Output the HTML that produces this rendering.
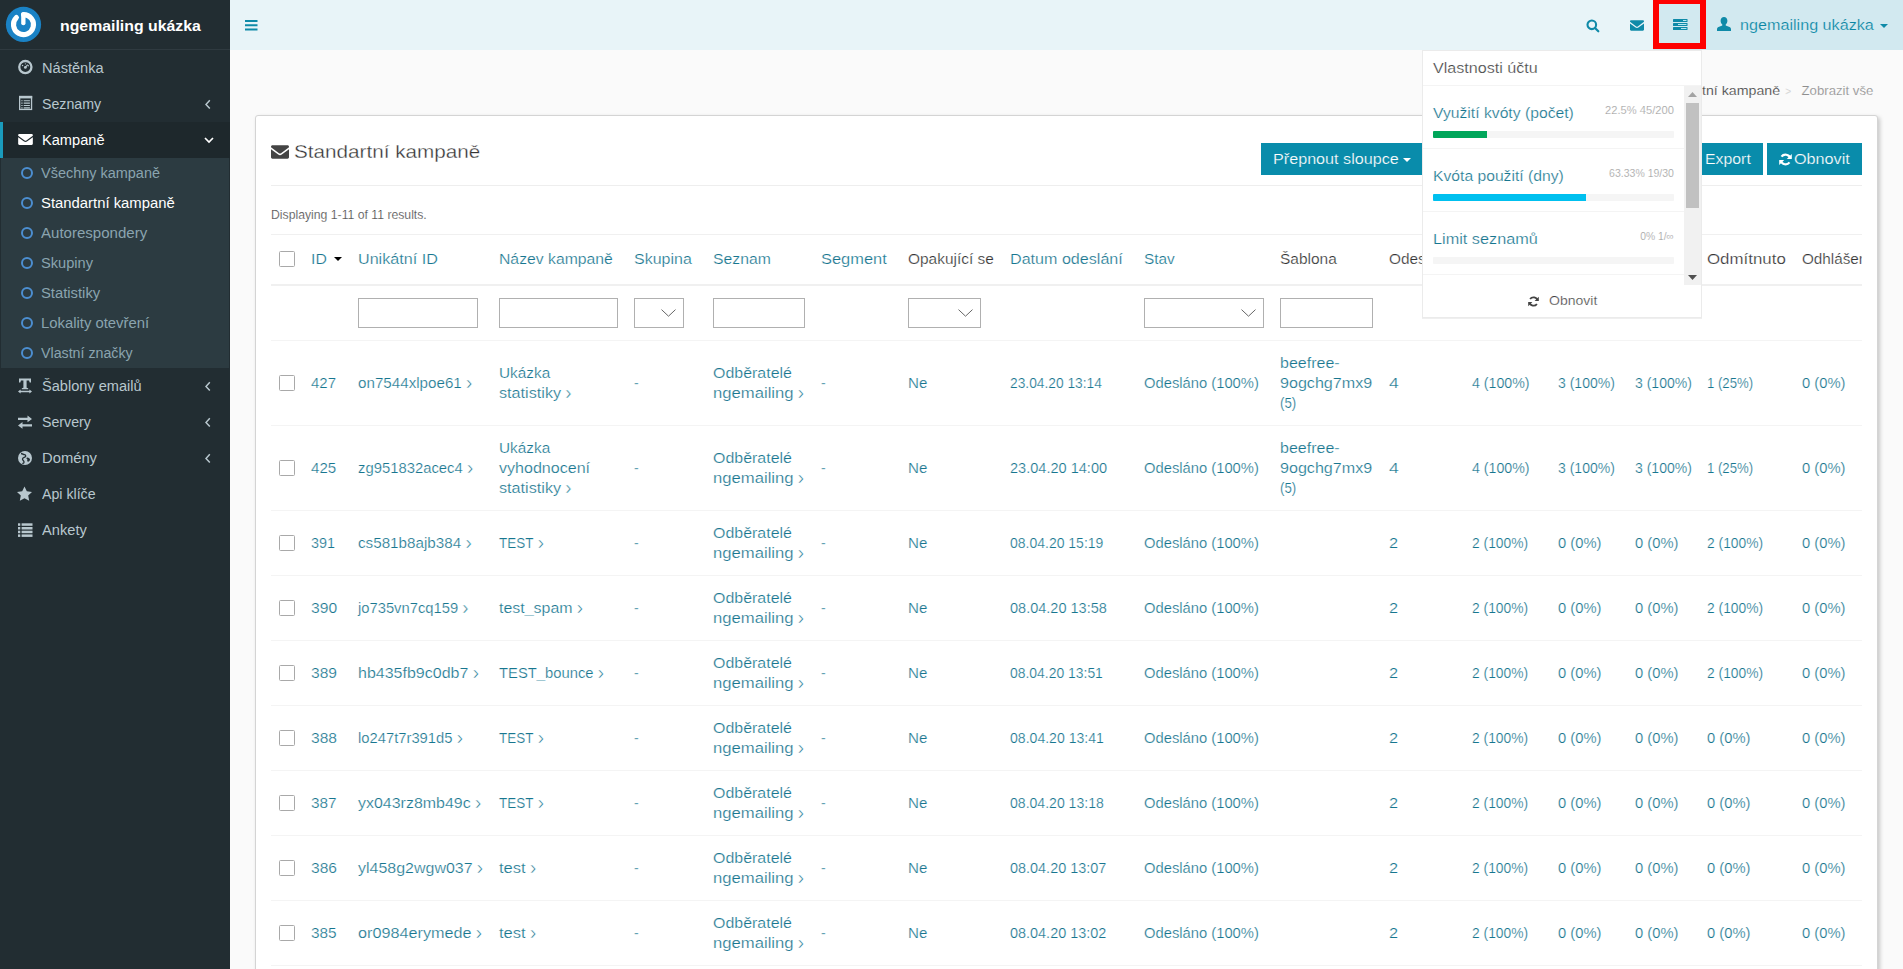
<!DOCTYPE html><html lang="cs"><head><meta charset="utf-8"><title>Standartní kampaně</title><style>
*{box-sizing:border-box}
html,body{margin:0;padding:0}
body{width:1903px;height:969px;overflow:hidden;background:#fafafa;font-family:"Liberation Sans",sans-serif;font-size:14px;line-height:20px;color:#333;position:relative}
a{color:#17768f;text-decoration:none}
svg{display:block}
.abs{position:absolute}
.sx{display:inline-block;transform-origin:0 50%;white-space:nowrap}
/* header */
.logo{position:absolute;left:0;top:0;width:230px;height:50px;background:#222d32;border-bottom:1px solid #2f3a40;color:#fff;font-weight:bold;font-size:15px;line-height:50px}
.logo .lt{position:absolute;left:60px;top:1px;white-space:nowrap}
.logo svg{position:absolute;left:5px;top:6px}
.navbar{position:absolute;left:230px;top:0;width:1673px;height:50px;background:#e8f4f8}
.navbar .user{position:absolute;left:1476px;top:0;width:197px;height:50px;background:#d2e9f0}
.navbar .open{position:absolute;left:1423px;top:0;width:53px;height:50px;background:#d2e9f0}
.nvt{position:absolute;white-space:nowrap;color:#0b85a3;font-size:14px;line-height:20px}
/* sidebar */
.sidebar{position:absolute;left:0;top:50px;width:230px;height:919px;background:#222d32}
.sidebar ul{list-style:none;margin:0;padding:0}
.sidebar>ul>li>a{display:block;height:36px;line-height:36px;padding-left:39px;color:#b8c7ce;border-left:3px solid transparent;position:relative;white-space:nowrap;font-size:14px}
.sidebar>ul>li.active>a{background:#1e282c;color:#fff;border-left-color:#1a9bbc}
.sidebar .ic{position:absolute;left:14px;top:0}
.sidebar .ar{position:absolute;right:19.5px;top:0}
.sidebar ul ul{background:#2c3b41;margin:0 1px}
.sidebar ul ul a{display:block;height:30px;line-height:30px;padding-left:40px;color:#8aa4af;position:relative;white-space:nowrap;font-size:14px}
.sidebar ul ul li.cur a{color:#fff}
.sidebar ul ul .ci{position:absolute;left:20px;top:9px;width:12px;height:12px;border:2px solid #4c8ed0;border-radius:50%}
/* content */
.bc{position:absolute;right:30px;top:80.5px;font-size:12px;line-height:20px;white-space:nowrap;color:#8e8e8e}
.bc b{font-weight:normal;color:#444}
.bc i{font-style:normal;color:#c4c4c4;font-size:10px}
.box{position:absolute;left:255px;top:115px;width:1623px;height:900px;background:#fff;border:1px solid #d4d4d4;border-radius:3px;box-shadow:2px 2px 4px rgba(0,0,0,.2)}
.title{position:absolute;left:38px;top:26px;font-size:17.5px;line-height:20px;color:#444;white-space:nowrap}
.box .tic{position:absolute;left:15px;top:29px}
.btn{position:absolute;top:27px;height:32px;background:#098cab;color:#fff;font-size:14px;line-height:20px;padding:6px 12px;white-space:nowrap}
.hr{position:absolute;left:15px;width:1591px;height:1px;background:#eee}
.sum{position:absolute;left:15px;top:89px;font-size:13px;line-height:20px;color:#444;white-space:nowrap}
.tw{position:absolute;left:15px;top:118px;width:1591px;height:760px;overflow:hidden}
table{border-collapse:collapse;table-layout:fixed;width:1649px;border-top:1px solid #f0f0f0}
th,td{padding:12px 8px;text-align:left;vertical-align:middle;font-weight:normal;line-height:20px;font-size:14px;overflow:hidden;white-space:nowrap}
td.wr{white-space:normal}
thead tr.h th{height:50px;padding-top:14px;padding-bottom:14px;border-bottom:2px solid #f0f0f0;color:#333}
thead tr.f td{height:55px;border-bottom:1px solid #f4f4f4}
tbody td{border-bottom:1px solid #f4f4f4;color:#17768f}
.cb{display:block;width:16px;height:16px;border:1px solid #a9a9a9;border-radius:1.5px;background:#fff}
.inp{display:block;height:30px;border:1px solid #b0b0b0;background:#fff;position:relative}
.inp svg{position:absolute;right:7.5px;top:10px}
.ra{font-size:20px;line-height:0;margin-left:4px;position:relative;top:1.5px;-webkit-text-stroke:.5px #fff}
.caret{display:inline-block;width:0;height:0;border-left:4px solid transparent;border-right:4px solid transparent;border-top:4px solid currentColor;vertical-align:middle}
/* dropdown */
.dd{position:absolute;left:1422px;top:50px;width:280px;height:268px;background:#fff;border:1px solid #ebebeb;box-shadow:0 1px 0 #efefef;font-size:14px}
.dd .hd{position:absolute;left:10px;top:7px;color:#444;white-space:nowrap}
.dd .ln{position:absolute;left:0;height:1px;background:#f4f4f4}
.dd .lb{position:absolute;left:10px;color:#17768f;white-space:nowrap}
.dd .sm{position:absolute;right:10px;font-size:11px;color:#999;white-space:nowrap;line-height:14px}
.dd .pg{position:absolute;left:10px;width:241px;height:7px;background:#f5f5f5;border-radius:1px;overflow:hidden}
.dd .pg div{height:7px}
.dd .sc{position:absolute;left:0;top:35px;width:261px;height:199px;overflow:hidden}
.dd .sb{position:absolute;left:261px;top:35px;width:17px;height:199px;background:#f1f1f1}
.dd .th{position:absolute;left:2px;top:17px;width:13px;height:105px;background:#c1c1c1}
.dd .ft{position:absolute;left:0;top:240px;width:278px;color:#444;font-size:12px;white-space:nowrap}
.box,.dd{-webkit-text-stroke:.22px #fff}
.btn{-webkit-text-stroke:.2px #098cab}
.bc{-webkit-text-stroke:.15px #fafafa}
.nvt{-webkit-text-stroke:.2px #d2e9f0}
.title{-webkit-text-stroke:.3px #fff;color:#333}
.red{position:absolute;left:1653px;top:-2px;width:53px;height:51px;border:6px solid #fe0000}
</style></head><body><aside class="sidebar"><ul><li><a><span class="ic"><svg width="17" height="36" viewBox="0 0 17 36" ><g transform="translate(.350,9.100)"><circle cx="8" cy="8" r="6.100" fill="none" stroke="#b8c7ce" stroke-width="2.300"/><circle cx="8" cy="8.300" r="1.400" fill="#b8c7ce"/><path d="M8 8.300 L10.300 5.600" stroke="#b8c7ce" stroke-width="1.100"/><circle cx="5.200" cy="6.300" r=".750" fill="#b8c7ce"/><circle cx="10.900" cy="6.600" r=".7" fill="#b8c7ce"/><circle cx="8" cy="4.700" r=".6" fill="#b8c7ce"/></g></svg></span><span class="sx" style="margin-right:2.4px;transform:scaleX(1.041)">Nástěnka</span></a></li><li><a><span class="ic"><svg width="17" height="36" viewBox="0 0 17 36" ><g transform="translate(2,9.900)"><rect x=".650" y=".650" width="11.900" height="12.900" fill="none" stroke="#b8c7ce" stroke-width="1.300"/><rect x="0" y="0" width="13.200" height="2.500" fill="#b8c7ce"/><path d="M2.300 4.800h1.300M4.700 4.800h6.200M2.300 7.200h1.300M4.700 7.200h6.200M2.300 9.600h1.300M4.700 9.600h6.200M2.300 12h1.300M4.700 12h6.200" stroke="#b8c7ce" stroke-width="1.150"/></g></svg></span><span class="sx" style="margin-right:0.7px;transform:scaleX(1.013)">Seznamy</span><span class="ar"><svg width="6" height="36" viewBox="0 0 6 36" ><path d="M4.800 14.300 L1 18.400 L4.800 22.500" fill="none" stroke="#b8c7ce" stroke-width="1.500"/></svg></span></a></li><li class="active"><a><span class="ic"><span style="display:block;padding-top:12px;padding-left:1px"><svg width="15" height="11" viewBox="0 0 16 12" ><path fill="#fff" d="M0 1.3C0 .6.6 0 1.3 0h13.4c.7 0 1.3.6 1.3 1.3v.5L8.9 7.1c-.5.4-1.3.4-1.800 0L0 1.800zM0 3.600l6.400 4.700c.9.700 2.300.700 3.200 0L16 3.600v7.100c0 .700-.600 1.300-1.300 1.300H1.300C.6 12 0 11.400 0 10.700z"/></svg></span></span><span class="sx" style="margin-right:2.6px;transform:scaleX(1.043)">Kampaně</span><span class="ar" style="right:16.5px"><svg width="10" height="36" viewBox="0 0 10 36" ><path d="M1 16 L5 20 L9 16" fill="none" stroke="#fff" stroke-width="1.700"/></svg></span></a><ul><li><a><span class="ci"></span><span class="sx" style="margin-right:3.8px;transform:scaleX(1.033)">Všechny kampaně</span></a></li><li class="cur"><a><span class="ci"></span><span class="sx" style="margin-right:7.7px;transform:scaleX(1.061)">Standartní kampaně</span></a></li><li><a><span class="ci"></span><span class="sx" style="margin-right:7.5px;transform:scaleX(1.075)">Autorespondery</span></a></li><li><a><span class="ci"></span><span class="sx" style="margin-right:2.2px;transform:scaleX(1.044)">Skupiny</span></a></li><li><a><span class="ci"></span><span class="sx" style="margin-right:3.2px;transform:scaleX(1.057)">Statistiky</span></a></li><li><a><span class="ci"></span><span class="sx" style="margin-right:6.1px;transform:scaleX(1.06)">Lokality otevření</span></a></li><li><a><span class="ci"></span><span class="sx" style="margin-right:1.3px;transform:scaleX(1.015)">Vlastní značky</span></a></li></ul></li><li><a><span class="ic"><svg width="16" height="36" viewBox="0 0 16 36" ><g transform="translate(1,10.500)" fill="#b8c7ce"><path d="M1 0h12v4h-1.300l-.7-2H8.600v7.300l1.600.5v1H3.800v-1l1.600-.5V2H3l-.7 2H1z"/><path d="M0 13l2.600-2v1.300h8.800V11l2.600 2-2.600 2v-1.300H2.600V15z"/></g></svg></span><span class="sx" style="margin-right:3.9px;transform:scaleX(1.04)">Šablony emailů</span><span class="ar"><svg width="6" height="36" viewBox="0 0 6 36" ><path d="M4.800 14.300 L1 18.400 L4.800 22.500" fill="none" stroke="#b8c7ce" stroke-width="1.500"/></svg></span></a></li><li><a><span class="ic"><svg width="16" height="36" viewBox="0 0 16 36" ><g transform="translate(1,11.500)" fill="#b8c7ce"><path d="M0 2.300h9.500V0L14 3.400 9.500 6.800V4.500H0z"/><path d="M14 8.800H4.500V6.500L0 9.900l4.500 3.400V11H14z"/></g></svg></span><span class="sx" style="margin-right:0.7px;transform:scaleX(1.014)">Servery</span><span class="ar"><svg width="6" height="36" viewBox="0 0 6 36" ><path d="M4.800 14.300 L1 18.400 L4.800 22.500" fill="none" stroke="#b8c7ce" stroke-width="1.500"/></svg></span></a></li><li><a><span class="ic"><svg width="16" height="36" viewBox="0 0 16 36" ><g transform="translate(1,11)"><circle cx="7" cy="7" r="7" fill="#b8c7ce"/><path d="M3 2.500c1.500 0 2 1 3.500 1.200s1.500 1.800.5 2.300-2.500.5-2.500 2 1.500 1.500 1.500 3-1 1.500-1.500 1" fill="none" stroke="#222d32" stroke-width="1.300"/><path d="M9.500 6.500c1 .5 2.500.5 2.500 2s-1.500 2.500-2.500 2 .5-2-.5-2.500-.5-2 .5-1.500z" fill="#222d32"/></g></svg></span><span class="sx" style="margin-right:2.9px;transform:scaleX(1.055)">Domény</span><span class="ar"><svg width="6" height="36" viewBox="0 0 6 36" ><path d="M4.800 14.300 L1 18.400 L4.800 22.500" fill="none" stroke="#b8c7ce" stroke-width="1.500"/></svg></span></a></li><li><a><span class="ic"><svg width="17" height="36" viewBox="0 0 17 36" ><g transform="translate(0,10.500)"><path fill="#b8c7ce" d="M7.500 0l2.300 4.800 5.200.7-3.800 3.600 1 5.200L7.500 11.800 2.800 14.300l1-5.200L0 5.500l5.200-.7z"/></g></svg></span><span class="sx" style="margin-right:0.7px;transform:scaleX(1.013)">Api klíče</span></a></li><li><a><span class="ic"><svg width="16" height="36" viewBox="0 0 16 36" ><g transform="translate(1,11.300)" fill="#b8c7ce"><rect x="0" y="0" width="2.300" height="2.500"/><rect x="3.600" y="0" width="10.900" height="2.500"/><rect x="0" y="3.700" width="2.300" height="2.500"/><rect x="3.600" y="3.700" width="10.900" height="2.500"/><rect x="0" y="7.400" width="2.300" height="2.500"/><rect x="3.600" y="7.400" width="10.900" height="2.500"/><rect x="0" y="11.100" width="2.300" height="2.500"/><rect x="3.600" y="11.100" width="10.900" height="2.500"/></g></svg></span><span class="sx" style="margin-right:2.0px;transform:scaleX(1.046)">Ankety</span></a></li></ul></aside><header><a class="logo"><svg width="38" height="38" viewBox="0 0 38 38" ><circle cx="18.500" cy="18.400" r="17.600" fill="#1a82c5"/><path d="M18.500 8.600A10 10 0 1 1 11.420 11.530" fill="none" stroke="#fff" stroke-width="5.100" stroke-linecap="round"/><path d="M18.350 8.300V17.200" stroke="#fff" stroke-width="4.300" stroke-linecap="round"/></svg><span class="lt"><span class="sx" style="margin-right:7.4px;transform:scaleX(1.056)">ngemailing ukázka</span></span></a><nav class="navbar"><div class="open"></div><div class="user"></div><div class="abs" style="left:15px;top:20px"><svg width="13" height="11" viewBox="0 0 13 11" ><path d="M0 1h12.500M0 5.200h12.500M0 9.400h12.500" stroke="#0f8aa8" stroke-width="2"/></svg></div><div class="abs" style="left:1356px;top:19px"><svg width="14" height="14" viewBox="0 0 14 14" ><circle cx="5.800" cy="5.800" r="4.300" fill="none" stroke="#0f8aa8" stroke-width="2.100"/><path d="M9 9l3.300 3.300" stroke="#0f8aa8" stroke-width="2.200" stroke-linecap="round"/></svg></div><div class="abs" style="left:1399.500px;top:20px"><svg width="14" height="11" viewBox="0 0 16 12" ><path fill="#0f8aa8" d="M0 1.3C0 .6.6 0 1.3 0h13.4c.7 0 1.3.6 1.3 1.3v.5L8.9 7.1c-.5.4-1.3.4-1.800 0L0 1.800zM0 3.600l6.400 4.700c.9.700 2.300.700 3.200 0L16 3.600v7.100c0 .700-.600 1.300-1.300 1.300H1.300C.6 12 0 11.400 0 10.700z"/></svg></div><div class="abs" style="left:1443px;top:19px"><svg width="15" height="12" viewBox="0 0 15 12" ><g fill="#0f8aa8"><rect x="0" y="0" width="14.500" height="2.900" rx=".5"/><rect x="0" y="4" width="14.500" height="2.900" rx=".5"/><rect x="0" y="8" width="14.500" height="2.900" rx=".5"/></g><g fill="#c9f3fb"><rect x="10" y="1" width="3.500" height=".9"/><rect x="5" y="5" width="8.500" height=".9"/><rect x="8" y="9" width="5.500" height=".9"/></g></svg></div><div class="abs" style="left:1487px;top:17px"><svg width="14" height="14" viewBox="0 0 14 14" ><path fill="#0f8aa8" d="M7 0c2 0 3.400 1.600 3.400 3.800 0 1.500-.7 3-1.700 3.800v.8l3.800 1.700c.9.400 1.500 1.200 1.500 2.200V14H0v-1.700c0-1 .6-1.800 1.500-2.200l3.800-1.700v-.8C4.300 6.800 3.600 5.300 3.600 3.800 3.600 1.600 5 0 7 0z"/></svg></div><span class="nvt" style="left:1510px;top:15px;font-size:15px"><span class="sx" style="margin-right:9.6px;transform:scaleX(1.077)">ngemailing ukázka</span></span><span class="caret abs" style="left:1650px;top:24px;color:#0f8aa8"></span></nav></header><ol class="bc" style="list-style:none;margin:0;padding:0"><li class="abs" style="right:208px"><b>Kampaně</b></li><li class="abs" style="right:189px"><i>&gt;</i></li><li class="abs" style="right:93px"><b><span class="sx" style="transform-origin:100% 50%;margin-left:19.7px;transform:scaleX(1.182)">Standartní kampaně</span></b></li><li class="abs" style="right:82px"><i>&gt;</i></li><li class="abs" style="right:0"><span class="sx" style="transform-origin:100% 50%;margin-left:6.4px;transform:scaleX(1.099)">Zobrazit vše</span></li></ol><section class="box"><span class="tic"><svg width="18" height="14" viewBox="0 0 16 12" ><path fill="#444" d="M0 1.3C0 .6.6 0 1.3 0h13.4c.7 0 1.3.6 1.3 1.3v.5L8.9 7.1c-.5.4-1.3.4-1.800 0L0 1.800zM0 3.600l6.400 4.700c.9.700 2.300.700 3.200 0L16 3.600v7.100c0 .700-.600 1.300-1.300 1.300H1.300C.6 12 0 11.400 0 10.700z"/></svg></span><h3 class="title" style="margin:0;font-weight:normal"><span class="sx" style="margin-right:28.7px;transform:scaleX(1.182)">Standartní kampaně</span></h3><a class="btn" style="left:1005px;width:161px"><span class="sx" style="margin-right:16.8px;transform:scaleX(1.154)">Přepnout sloupce</span><span class="caret abs" style="left:141.500px;top:15px"></span></a><a class="btn" style="left:1420px;width:87px;padding-left:29px"><span class="sx" style="margin-right:5.3px;transform:scaleX(1.132)">Export</span></a><a class="btn" style="left:1511px;width:95px"><span class="abs" style="left:12px;top:10px"><svg width="13" height="13" viewBox="0 0 13 13" ><path d="M11.300 5.200A5 5 0 0 0 2.500 3.700M1.700 7.800A5 5 0 0 0 10.500 9.300" fill="none" stroke="#fff" stroke-width="2.200"/><path d="M12.800 1v5H7.800zM.2 12V7h5z" fill="#fff"/></svg></span><span style="margin-left:15px"><span class="sx" style="margin-right:7.5px;transform:scaleX(1.156)">Obnovit</span></span></a><div class="hr" style="top:69px"></div><div class="sum"><span class="sx" style="margin-right:-9.9px;transform:scaleX(0.94)">Displaying 1-11 of 11 results.</span></div><div class="tw"><table><colgroup><col style="width:32px"><col style="width:47px"><col style="width:141px"><col style="width:135px"><col style="width:79px"><col style="width:108px"><col style="width:87px"><col style="width:102px"><col style="width:134px"><col style="width:136px"><col style="width:109px"><col style="width:83px"><col style="width:86px"><col style="width:77px"><col style="width:72px"><col style="width:95px"><col style="width:126px"></colgroup><thead><tr class="h"><th><span class="cb"></span></th><th><a><span class="sx" style="margin-right:1.8px;transform:scaleX(1.129)">ID</span></a> <span class="caret" style="color:#000;margin-left:3.5px;position:relative;top:-2px"></span></th><th><a><span class="sx" style="margin-right:10.5px;transform:scaleX(1.152)">Unikátní ID</span></a></th><th><a><span class="sx" style="margin-right:12.6px;transform:scaleX(1.125)">Název kampaně</span></a></th><th><a><span class="sx" style="margin-right:7.2px;transform:scaleX(1.142)">Skupina</span></a></th><th><a><span class="sx" style="margin-right:6.4px;transform:scaleX(1.125)">Seznam</span></a></th><th><a><span class="sx" style="margin-right:9.8px;transform:scaleX(1.174)">Segment</span></a></th><th><span class="sx" style="margin-right:8.0px;transform:scaleX(1.102)">Opakující se</span></th><th><a><span class="sx" style="margin-right:14.7px;transform:scaleX(1.15)">Datum odeslání</span></a></th><th><a><span class="sx" style="margin-right:2.8px;transform:scaleX(1.099)">Stav</span></a></th><th><span class="sx" style="margin-right:5.4px;transform:scaleX(1.105)">Šablona</span></th><th><span class="sx" style="margin-right:5.9px;transform:scaleX(1.098)">Odesláno</span></th><th><span class="sx" style="margin-right:5.1px;transform:scaleX(1.084)">Doručeno</span></th><th><span class="sx" style="margin-right:5.2px;transform:scaleX(1.09)">Otevřeno</span></th><th><span class="sx" style="margin-right:6.0px;transform:scaleX(1.12)">Kliknuto</span></th><th><span class="sx" style="margin-right:13.4px;transform:scaleX(1.205)">Odmítnuto</span></th><th><span class="sx" style="margin-right:6.1px;transform:scaleX(1.09)">Odhlášeno</span></th></tr><tr class="f"><td></td><td></td><td><span class="inp" style="width:120px"></span></td><td><span class="inp" style="width:119px"></span></td><td><span class="inp" style="width:50px"><svg width="15" height="8" viewBox="0 0 15 8" ><path d="M.5.6l7 6.600 7-6.600" fill="none" stroke="#666" stroke-width="1"/></svg></span></td><td><span class="inp" style="width:92px"></span></td><td></td><td><span class="inp" style="width:73px"><svg width="15" height="8" viewBox="0 0 15 8" ><path d="M.5.6l7 6.600 7-6.600" fill="none" stroke="#666" stroke-width="1"/></svg></span></td><td></td><td><span class="inp" style="width:120px"><svg width="15" height="8" viewBox="0 0 15 8" ><path d="M.5.6l7 6.600 7-6.600" fill="none" stroke="#666" stroke-width="1"/></svg></span></td><td><span class="inp" style="width:93px"></span></td><td></td><td></td><td></td><td></td><td></td><td></td></tr></thead><tbody><tr style="height:85px"><td><span class="cb"></span></td><td><a><span class="sx n" style="margin-right:1.6px;transform:scaleX(1.07)">427</span></a></td><td><a><span class="sx u" style="margin-right:8.0px;transform:scaleX(1.084)">on7544xlpoe61</span><span class="ra">›</span></a></td><td class="wr"><a><span class="sx w" style="margin-right:4.5px;transform:scaleX(1.097)">Ukázka</span><br><span class="sx w" style="margin-right:8.4px;transform:scaleX(1.157)">statistiky</span><span class="ra">›</span></a></td><td>-</td><td class="wr"><a><span class="sx w" style="margin-right:9.7px;transform:scaleX(1.14)">Odběratelé</span><br><span class="sx w" style="margin-right:12.9px;transform:scaleX(1.19)">ngemailing</span><span class="ra">›</span></a></td><td>-</td><td><span class="sx w" style="margin-right:1.4px;transform:scaleX(1.078)">Ne</span></td><td><span class="sx d" style="margin-right:-1.6px;transform:scaleX(0.983)">23.04.20 13:14</span></td><td><span class="sx" style="margin-right:5.8px;transform:scaleX(1.054)">Odesláno (100%)</span></td><td class="wr"><a><span class="sx w" style="margin-right:7.5px;transform:scaleX(1.145)">beefree-</span><br><span class="sx w" style="margin-right:12.0px;transform:scaleX(1.15)">9ogchg7mx9</span><br><span class="sx w" style="margin-right:-0.9px;transform:scaleX(0.946)">(5)</span></a></td><td><a><span class="sx p" style="margin-right:2.0px;transform:scaleX(1.257)">4</span></a></td><td><a><span class="sx p" style="margin-right:0.8px;transform:scaleX(1.014)">4 (100%)</span></a></td><td><a><span class="sx p" style="margin-right:0.1px;transform:scaleX(1.002)">3 (100%)</span></a></td><td><a><span class="sx p" style="margin-right:0.1px;transform:scaleX(1.002)">3 (100%)</span></a></td><td><a><span class="sx p" style="margin-right:-2.9px;transform:scaleX(0.94)">1 (25%)</span></a></td><td><a><span class="sx p" style="margin-right:2.2px;transform:scaleX(1.053)">0 (0%)</span></a></td></tr><tr style="height:85px"><td><span class="cb"></span></td><td><a><span class="sx n" style="margin-right:1.8px;transform:scaleX(1.079)">425</span></a></td><td><a><span class="sx u" style="margin-right:5.8px;transform:scaleX(1.059)">zg951832acec4</span><span class="ra">›</span></a></td><td class="wr"><a><span class="sx w" style="margin-right:4.5px;transform:scaleX(1.097)">Ukázka</span><br><span class="sx w" style="margin-right:11.7px;transform:scaleX(1.147)">vyhodnocení</span><br><span class="sx w" style="margin-right:8.4px;transform:scaleX(1.157)">statistiky</span><span class="ra">›</span></a></td><td>-</td><td class="wr"><a><span class="sx w" style="margin-right:9.7px;transform:scaleX(1.14)">Odběratelé</span><br><span class="sx w" style="margin-right:12.9px;transform:scaleX(1.19)">ngemailing</span><span class="ra">›</span></a></td><td>-</td><td><span class="sx w" style="margin-right:1.4px;transform:scaleX(1.078)">Ne</span></td><td><span class="sx d" style="margin-right:3.7px;transform:scaleX(1.039)">23.04.20 14:00</span></td><td><span class="sx" style="margin-right:5.8px;transform:scaleX(1.054)">Odesláno (100%)</span></td><td class="wr"><a><span class="sx w" style="margin-right:7.5px;transform:scaleX(1.145)">beefree-</span><br><span class="sx w" style="margin-right:12.0px;transform:scaleX(1.15)">9ogchg7mx9</span><br><span class="sx w" style="margin-right:-0.9px;transform:scaleX(0.946)">(5)</span></a></td><td><a><span class="sx p" style="margin-right:2.0px;transform:scaleX(1.257)">4</span></a></td><td><a><span class="sx p" style="margin-right:0.8px;transform:scaleX(1.014)">4 (100%)</span></a></td><td><a><span class="sx p" style="margin-right:0.1px;transform:scaleX(1.002)">3 (100%)</span></a></td><td><a><span class="sx p" style="margin-right:0.1px;transform:scaleX(1.002)">3 (100%)</span></a></td><td><a><span class="sx p" style="margin-right:-2.9px;transform:scaleX(0.94)">1 (25%)</span></a></td><td><a><span class="sx p" style="margin-right:2.2px;transform:scaleX(1.053)">0 (0%)</span></a></td></tr><tr style="height:65px"><td><span class="cb"></span></td><td><a><span class="sx n" style="margin-right:0.6px;transform:scaleX(1.027)">391</span></a></td><td><a><span class="sx u" style="margin-right:8.2px;transform:scaleX(1.086)">cs581b8ajb384</span><span class="ra">›</span></a></td><td class="wr"><a><span class="sx w" style="margin-right:-1.4px;transform:scaleX(0.961)">TEST</span><span class="ra">›</span></a></td><td>-</td><td class="wr"><a><span class="sx w" style="margin-right:9.7px;transform:scaleX(1.14)">Odběratelé</span><br><span class="sx w" style="margin-right:12.9px;transform:scaleX(1.19)">ngemailing</span><span class="ra">›</span></a></td><td>-</td><td><span class="sx w" style="margin-right:1.4px;transform:scaleX(1.078)">Ne</span></td><td><span class="sx d" style="margin-right:-0.1px;transform:scaleX(0.999)">08.04.20 15:19</span></td><td><span class="sx" style="margin-right:5.8px;transform:scaleX(1.054)">Odesláno (100%)</span></td><td class="wr"><a><span class="w"></span></a></td><td><a><span class="sx p" style="margin-right:1.3px;transform:scaleX(1.167)">2</span></a></td><td><a><span class="sx p" style="margin-right:-0.7px;transform:scaleX(0.987)">2 (100%)</span></a></td><td><a><span class="sx p" style="margin-right:2.2px;transform:scaleX(1.053)">0 (0%)</span></a></td><td><a><span class="sx p" style="margin-right:2.2px;transform:scaleX(1.053)">0 (0%)</span></a></td><td><a><span class="sx p" style="margin-right:-0.7px;transform:scaleX(0.987)">2 (100%)</span></a></td><td><a><span class="sx p" style="margin-right:2.2px;transform:scaleX(1.053)">0 (0%)</span></a></td></tr><tr style="height:65px"><td><span class="cb"></span></td><td><a><span class="sx n" style="margin-right:2.7px;transform:scaleX(1.117)">390</span></a></td><td><a><span class="sx u" style="margin-right:5.1px;transform:scaleX(1.054)">jo735vn7cq159</span><span class="ra">›</span></a></td><td class="wr"><a><span class="sx w" style="margin-right:9.0px;transform:scaleX(1.139)">test_spam</span><span class="ra">›</span></a></td><td>-</td><td class="wr"><a><span class="sx w" style="margin-right:9.7px;transform:scaleX(1.14)">Odběratelé</span><br><span class="sx w" style="margin-right:12.9px;transform:scaleX(1.19)">ngemailing</span><span class="ra">›</span></a></td><td>-</td><td><span class="sx w" style="margin-right:1.4px;transform:scaleX(1.078)">Ne</span></td><td><span class="sx d" style="margin-right:3.5px;transform:scaleX(1.037)">08.04.20 13:58</span></td><td><span class="sx" style="margin-right:5.8px;transform:scaleX(1.054)">Odesláno (100%)</span></td><td class="wr"><a><span class="w"></span></a></td><td><a><span class="sx p" style="margin-right:1.3px;transform:scaleX(1.167)">2</span></a></td><td><a><span class="sx p" style="margin-right:-0.7px;transform:scaleX(0.987)">2 (100%)</span></a></td><td><a><span class="sx p" style="margin-right:2.2px;transform:scaleX(1.053)">0 (0%)</span></a></td><td><a><span class="sx p" style="margin-right:2.2px;transform:scaleX(1.053)">0 (0%)</span></a></td><td><a><span class="sx p" style="margin-right:-0.7px;transform:scaleX(0.987)">2 (100%)</span></a></td><td><a><span class="sx p" style="margin-right:2.2px;transform:scaleX(1.053)">0 (0%)</span></a></td></tr><tr style="height:65px"><td><span class="cb"></span></td><td><a><span class="sx n" style="margin-right:2.6px;transform:scaleX(1.113)">389</span></a></td><td><a><span class="sx u" style="margin-right:13.9px;transform:scaleX(1.143)">hb435fb9c0db7</span><span class="ra">›</span></a></td><td class="wr"><a><span class="sx w" style="margin-right:5.1px;transform:scaleX(1.057)">TEST_bounce</span><span class="ra">›</span></a></td><td>-</td><td class="wr"><a><span class="sx w" style="margin-right:9.7px;transform:scaleX(1.14)">Odběratelé</span><br><span class="sx w" style="margin-right:12.9px;transform:scaleX(1.19)">ngemailing</span><span class="ra">›</span></a></td><td>-</td><td><span class="sx w" style="margin-right:1.4px;transform:scaleX(1.078)">Ne</span></td><td><span class="sx d" style="margin-right:-0.5px;transform:scaleX(0.994)">08.04.20 13:51</span></td><td><span class="sx" style="margin-right:5.8px;transform:scaleX(1.054)">Odesláno (100%)</span></td><td class="wr"><a><span class="w"></span></a></td><td><a><span class="sx p" style="margin-right:1.3px;transform:scaleX(1.167)">2</span></a></td><td><a><span class="sx p" style="margin-right:-0.7px;transform:scaleX(0.987)">2 (100%)</span></a></td><td><a><span class="sx p" style="margin-right:2.2px;transform:scaleX(1.053)">0 (0%)</span></a></td><td><a><span class="sx p" style="margin-right:2.2px;transform:scaleX(1.053)">0 (0%)</span></a></td><td><a><span class="sx p" style="margin-right:-0.7px;transform:scaleX(0.987)">2 (100%)</span></a></td><td><a><span class="sx p" style="margin-right:2.2px;transform:scaleX(1.053)">0 (0%)</span></a></td></tr><tr style="height:65px"><td><span class="cb"></span></td><td><a><span class="sx n" style="margin-right:2.6px;transform:scaleX(1.113)">388</span></a></td><td><a><span class="sx u" style="margin-right:5.0px;transform:scaleX(1.055)">lo247t7r391d5</span><span class="ra">›</span></a></td><td class="wr"><a><span class="sx w" style="margin-right:-1.4px;transform:scaleX(0.961)">TEST</span><span class="ra">›</span></a></td><td>-</td><td class="wr"><a><span class="sx w" style="margin-right:9.7px;transform:scaleX(1.14)">Odběratelé</span><br><span class="sx w" style="margin-right:12.9px;transform:scaleX(1.19)">ngemailing</span><span class="ra">›</span></a></td><td>-</td><td><span class="sx w" style="margin-right:1.4px;transform:scaleX(1.078)">Ne</span></td><td><span class="sx d" style="margin-right:0.5px;transform:scaleX(1.005)">08.04.20 13:41</span></td><td><span class="sx" style="margin-right:5.8px;transform:scaleX(1.054)">Odesláno (100%)</span></td><td class="wr"><a><span class="w"></span></a></td><td><a><span class="sx p" style="margin-right:1.3px;transform:scaleX(1.167)">2</span></a></td><td><a><span class="sx p" style="margin-right:-0.7px;transform:scaleX(0.987)">2 (100%)</span></a></td><td><a><span class="sx p" style="margin-right:2.2px;transform:scaleX(1.053)">0 (0%)</span></a></td><td><a><span class="sx p" style="margin-right:2.2px;transform:scaleX(1.053)">0 (0%)</span></a></td><td><a><span class="sx p" style="margin-right:2.2px;transform:scaleX(1.053)">0 (0%)</span></a></td><td><a><span class="sx p" style="margin-right:2.2px;transform:scaleX(1.053)">0 (0%)</span></a></td></tr><tr style="height:65px"><td><span class="cb"></span></td><td><a><span class="sx n" style="margin-right:2.2px;transform:scaleX(1.096)">387</span></a></td><td><a><span class="sx u" style="margin-right:13.9px;transform:scaleX(1.14)">yx043rz8mb49c</span><span class="ra">›</span></a></td><td class="wr"><a><span class="sx w" style="margin-right:-1.4px;transform:scaleX(0.961)">TEST</span><span class="ra">›</span></a></td><td>-</td><td class="wr"><a><span class="sx w" style="margin-right:9.7px;transform:scaleX(1.14)">Odběratelé</span><br><span class="sx w" style="margin-right:12.9px;transform:scaleX(1.19)">ngemailing</span><span class="ra">›</span></a></td><td>-</td><td><span class="sx w" style="margin-right:1.4px;transform:scaleX(1.078)">Ne</span></td><td><span class="sx d" style="margin-right:0.4px;transform:scaleX(1.004)">08.04.20 13:18</span></td><td><span class="sx" style="margin-right:5.8px;transform:scaleX(1.054)">Odesláno (100%)</span></td><td class="wr"><a><span class="w"></span></a></td><td><a><span class="sx p" style="margin-right:1.3px;transform:scaleX(1.167)">2</span></a></td><td><a><span class="sx p" style="margin-right:-0.7px;transform:scaleX(0.987)">2 (100%)</span></a></td><td><a><span class="sx p" style="margin-right:2.2px;transform:scaleX(1.053)">0 (0%)</span></a></td><td><a><span class="sx p" style="margin-right:2.2px;transform:scaleX(1.053)">0 (0%)</span></a></td><td><a><span class="sx p" style="margin-right:2.2px;transform:scaleX(1.053)">0 (0%)</span></a></td><td><a><span class="sx p" style="margin-right:2.2px;transform:scaleX(1.053)">0 (0%)</span></a></td></tr><tr style="height:65px"><td><span class="cb"></span></td><td><a><span class="sx n" style="margin-right:2.6px;transform:scaleX(1.113)">386</span></a></td><td><a><span class="sx u" style="margin-right:14.2px;transform:scaleX(1.141)">yl458g2wgw037</span><span class="ra">›</span></a></td><td class="wr"><a><span class="sx w" style="margin-right:4.1px;transform:scaleX(1.183)">test</span><span class="ra">›</span></a></td><td>-</td><td class="wr"><a><span class="sx w" style="margin-right:9.7px;transform:scaleX(1.14)">Odběratelé</span><br><span class="sx w" style="margin-right:12.9px;transform:scaleX(1.19)">ngemailing</span><span class="ra">›</span></a></td><td>-</td><td><span class="sx w" style="margin-right:1.4px;transform:scaleX(1.078)">Ne</span></td><td><span class="sx d" style="margin-right:2.9px;transform:scaleX(1.031)">08.04.20 13:07</span></td><td><span class="sx" style="margin-right:5.8px;transform:scaleX(1.054)">Odesláno (100%)</span></td><td class="wr"><a><span class="w"></span></a></td><td><a><span class="sx p" style="margin-right:1.3px;transform:scaleX(1.167)">2</span></a></td><td><a><span class="sx p" style="margin-right:-0.7px;transform:scaleX(0.987)">2 (100%)</span></a></td><td><a><span class="sx p" style="margin-right:2.2px;transform:scaleX(1.053)">0 (0%)</span></a></td><td><a><span class="sx p" style="margin-right:2.2px;transform:scaleX(1.053)">0 (0%)</span></a></td><td><a><span class="sx p" style="margin-right:2.2px;transform:scaleX(1.053)">0 (0%)</span></a></td><td><a><span class="sx p" style="margin-right:2.2px;transform:scaleX(1.053)">0 (0%)</span></a></td></tr><tr style="height:65px"><td><span class="cb"></span></td><td><a><span class="sx n" style="margin-right:2.2px;transform:scaleX(1.096)">385</span></a></td><td><a><span class="sx u" style="margin-right:15.5px;transform:scaleX(1.158)">or0984erymede</span><span class="ra">›</span></a></td><td class="wr"><a><span class="sx w" style="margin-right:4.1px;transform:scaleX(1.183)">test</span><span class="ra">›</span></a></td><td>-</td><td class="wr"><a><span class="sx w" style="margin-right:9.7px;transform:scaleX(1.14)">Odběratelé</span><br><span class="sx w" style="margin-right:12.9px;transform:scaleX(1.19)">ngemailing</span><span class="ra">›</span></a></td><td>-</td><td><span class="sx w" style="margin-right:1.4px;transform:scaleX(1.078)">Ne</span></td><td><span class="sx d" style="margin-right:2.9px;transform:scaleX(1.031)">08.04.20 13:02</span></td><td><span class="sx" style="margin-right:5.8px;transform:scaleX(1.054)">Odesláno (100%)</span></td><td class="wr"><a><span class="w"></span></a></td><td><a><span class="sx p" style="margin-right:1.3px;transform:scaleX(1.167)">2</span></a></td><td><a><span class="sx p" style="margin-right:-0.7px;transform:scaleX(0.987)">2 (100%)</span></a></td><td><a><span class="sx p" style="margin-right:2.2px;transform:scaleX(1.053)">0 (0%)</span></a></td><td><a><span class="sx p" style="margin-right:2.2px;transform:scaleX(1.053)">0 (0%)</span></a></td><td><a><span class="sx p" style="margin-right:2.2px;transform:scaleX(1.053)">0 (0%)</span></a></td><td><a><span class="sx p" style="margin-right:2.2px;transform:scaleX(1.053)">0 (0%)</span></a></td></tr><tr style="height:65px"><td><span class="cb"></span></td><td><a><span class="sx n" style="margin-right:2.4px;transform:scaleX(1.104)">384</span></a></td><td><a><span class="sx u" style="margin-right:12.3px;transform:scaleX(1.127)">ab1234cdefg56</span><span class="ra">›</span></a></td><td class="wr"><a><span class="sx w" style="margin-right:4.1px;transform:scaleX(1.183)">test</span><span class="ra">›</span></a></td><td>-</td><td class="wr"><a><span class="sx w" style="margin-right:9.7px;transform:scaleX(1.14)">Odběratelé</span><br><span class="sx w" style="margin-right:12.9px;transform:scaleX(1.19)">ngemailing</span><span class="ra">›</span></a></td><td>-</td><td><span class="sx w" style="margin-right:1.4px;transform:scaleX(1.078)">Ne</span></td><td><span class="sx d" style="margin-right:3.4px;transform:scaleX(1.036)">08.04.20 12:55</span></td><td><span class="sx" style="margin-right:5.8px;transform:scaleX(1.054)">Odesláno (100%)</span></td><td class="wr"><a><span class="w"></span></a></td><td><a><span class="sx p" style="margin-right:1.3px;transform:scaleX(1.167)">2</span></a></td><td><a><span class="sx p" style="margin-right:-0.7px;transform:scaleX(0.987)">2 (100%)</span></a></td><td><a><span class="sx p" style="margin-right:2.2px;transform:scaleX(1.053)">0 (0%)</span></a></td><td><a><span class="sx p" style="margin-right:2.2px;transform:scaleX(1.053)">0 (0%)</span></a></td><td><a><span class="sx p" style="margin-right:2.2px;transform:scaleX(1.053)">0 (0%)</span></a></td><td><a><span class="sx p" style="margin-right:2.2px;transform:scaleX(1.053)">0 (0%)</span></a></td></tr></tbody></table></div></section><div class="dd"><div class="hd"><span class="sx" style="margin-right:13.7px;transform:scaleX(1.151)">Vlastnosti účtu</span></div><div class="ln" style="top:34px;width:278px"></div><div class="sc"><div class="lb" style="top:17px"><span class="sx" style="margin-right:15.3px;transform:scaleX(1.122)">Využití kvóty (počet)</span></div><div class="sm" style="top:17px"><span class="sx" style="transform-origin:100% 50%;margin-left:0.9px;transform:scaleX(1.013)">22.5% 45/200</span></div><div class="pg" style="top:45px"><div style="width:22.5%;background:#00a65a"></div></div><div class="ln" style="top:62px;width:261px"></div><div class="lb" style="top:80px"><span class="sx" style="margin-right:14.1px;transform:scaleX(1.12)">Kvóta použití (dny)</span></div><div class="sm" style="top:80px"><span class="sx" style="transform-origin:100% 50%;margin-left:-3.1px;transform:scaleX(0.954)">63.33% 19/30</span></div><div class="pg" style="top:108px"><div style="width:63.33%;background:#00c0ef"></div></div><div class="ln" style="top:125px;width:261px"></div><div class="lb" style="top:143px"><span class="sx" style="margin-right:14.5px;transform:scaleX(1.161)">Limit seznamů</span></div><div class="sm" style="top:143px"><span class="sx" style="transform-origin:100% 50%;margin-left:-2.2px;transform:scaleX(0.939)">0% 1/∞</span></div><div class="pg" style="top:171px"><div style="width:0%;background:#00a65a"></div></div><div class="ln" style="top:188px;width:261px"></div><div class="lb" style="top:206px"><span class="sx" style="margin-right:21.2px;transform:scaleX(1.213)">Limit odběratelů</span></div><div class="sm" style="top:206px"><span class="sx" style="transform-origin:100% 50%;margin-left:-2.2px;transform:scaleX(0.939)">0% 4/∞</span></div><div class="pg" style="top:234px"><div style="width:0%;background:#00a65a"></div></div><div class="ln" style="top:251px;width:261px"></div></div><div class="sb"><div class="th"></div><div class="abs" style="left:4px;top:6px"><svg width="9" height="5" viewBox="0 0 9 5" ><path d="M0 5L4.500 0 9 5z" fill="#a3a3a3"/></svg></div><div class="abs" style="left:4px;top:189px"><svg width="9" height="5" viewBox="0 0 9 5" ><path d="M0 0L4.500 5 9 0z" fill="#505050"/></svg></div></div><div class="ft" style="height:20px"><span class="abs" style="left:105px;top:5px"><svg width="11" height="11" viewBox="0 0 11 11" ><path d="M9.600 4.400A4.200 4.200 0 0 0 2.100 3.100M1.400 6.600A4.200 4.200 0 0 0 8.900 7.900" fill="none" stroke="#444" stroke-width="1.800"/><path d="M10.800 .8v4.200H6.600zM.2 10.200V6h4.200z" fill="#444"/></svg></span><span class="abs" style="left:126px;top:0"><span class="sx" style="margin-right:6.9px;transform:scaleX(1.168)">Obnovit</span></span></div></div><div class="red"></div></body></html>
